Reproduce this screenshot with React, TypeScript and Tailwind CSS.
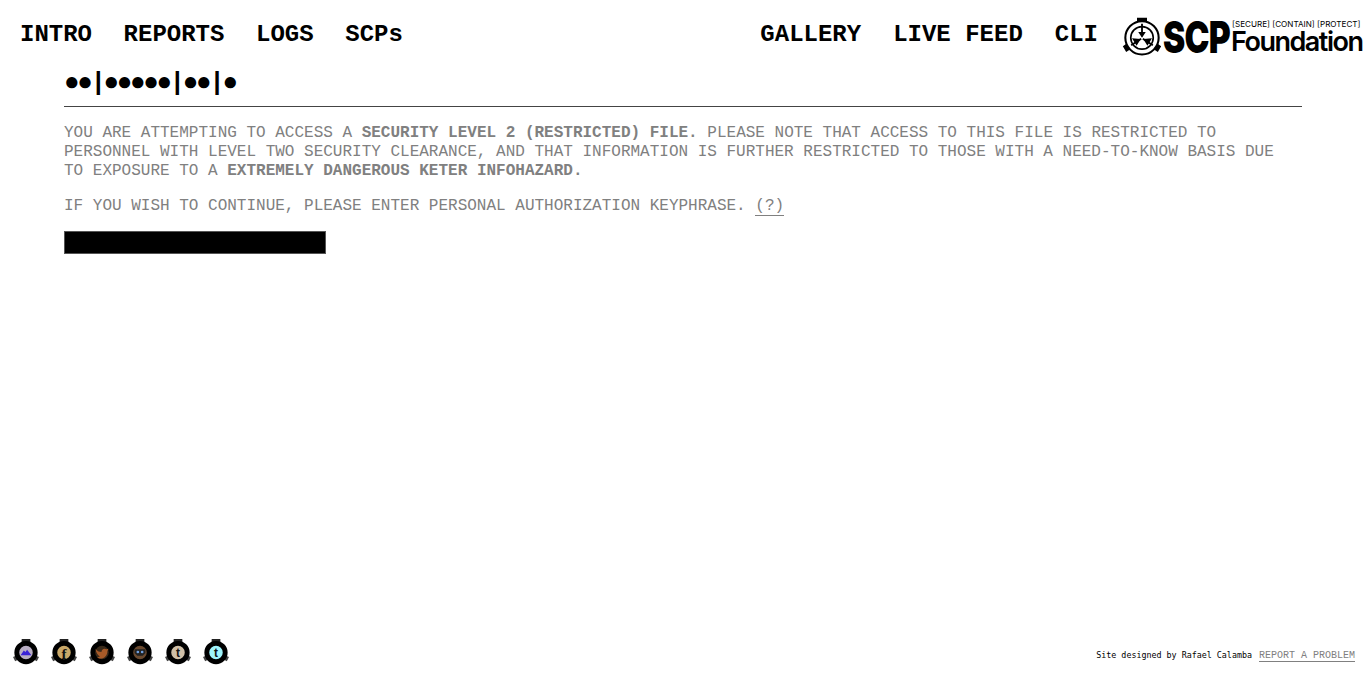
import { ReactNode } from "react";

const mono = "font-['Liberation_Mono','Courier_New',monospace]";

function NavLink({ children }: { children: ReactNode }) {
  return <a className={`${mono} text-2xl leading-[28px] font-bold text-black whitespace-pre`}>{children}</a>;
}

function Logo() {
  return (
    <div className="flex items-start w-[243px] shrink-0">
      <svg width="40" height="40" viewBox="0 0 48 48" className="shrink-0">
        <path d="M18 1h12v6h-12z M1 35l6-4 4 7-6 4z M47 35l-6-4-4 7 6 4z" fill="#000" />
        <circle cx="24" cy="25" r="20" fill="#fff" stroke="#000" strokeWidth="2.5" />
        <circle cx="24" cy="25" r="13.5" fill="none" stroke="#000" strokeWidth="2" />
        <path d="M24 8v15M11 34l12-8M37 34l-12-8" fill="none" stroke="#000" strokeWidth="2.2" />
        <path d="M19.5 18l4.5 7 4.5-7zM12 25.5l10.5 1-5 8zM36 25.5l-10.5 1 5 8z" fill="#000" />
      </svg>
      <span className="block w-[67px] origin-left scale-x-[0.76] font-['Inter',sans-serif] text-[44px] leading-[40px] font-black tracking-[-1px] text-black ml-[1px] whitespace-nowrap">SCP</span>
      <div className="flex flex-col ml-[1px] w-[131px]">
        <span className="font-['Inter',sans-serif] text-[8.1px] leading-[9px] mt-[3px] ml-[1px] text-black whitespace-nowrap">[SECURE] [CONTAIN] [PROTECT]</span>
        <span className="font-['Inter',sans-serif] text-[27px] leading-[26px] font-semibold tracking-[-1.5px] text-black whitespace-nowrap">Foundation</span>
      </div>
    </div>
  );
}

function SocialBadge({ bg, children }: { bg: string; children?: ReactNode }) {
  return (
    <svg width="26" height="26" viewBox="0 0 48 48" className="shrink-0">
      <rect x="16" y="0" width="16" height="6" fill="#222" />
      <path d="M0 33l7-3 3 8-6 3zM48 33l-7-3-3 8 6 3z" fill="#444" />
      <circle cx="24" cy="25" r="17" fill={bg} stroke="#000" strokeWidth="9" />
      {children}
    </svg>
  );
}

export default function App() {
  return (
    <div className="h-[673px] flex flex-col bg-white">
      <header className="flex items-start justify-between pl-5 pr-[1px] pt-[17px]">
        <nav className="flex gap-[31.6px] mt-[4px]">
          <NavLink>INTRO</NavLink>
          <NavLink>REPORTS</NavLink>
          <NavLink>LOGS</NavLink>
          <NavLink>SCPs</NavLink>
        </nav>
        <div className="flex items-start gap-[24px]">
          <nav className="flex gap-8 mt-[4px]">
            <NavLink>GALLERY</NavLink>
            <NavLink>LIVE FEED</NavLink>
            <NavLink>CLI</NavLink>
          </nav>
          <Logo />
        </div>
      </header>

      <main className={`${mono} mx-16 w-[1238px] mt-[11px]`}>
        <h1 className="text-[26px] tracking-[-2.4px] leading-[30px] font-bold text-black border-b border-[#444] pb-[8px]">●●|●●●●●|●●|●</h1>
        <div className="text-base leading-[19px] text-[#808080] mt-[17px]">
          <p>YOU ARE ATTEMPTING TO ACCESS A <b>SECURITY LEVEL 2 (RESTRICTED) FILE.</b> PLEASE NOTE THAT ACCESS TO THIS FILE IS RESTRICTED TO</p>
          <p>PERSONNEL WITH LEVEL TWO SECURITY CLEARANCE, AND THAT INFORMATION IS FURTHER RESTRICTED TO THOSE WITH A NEED-TO-KNOW BASIS DUE</p>
          <p>TO EXPOSURE TO A <b>EXTREMELY DANGEROUS KETER INFOHAZARD.</b></p>
        </div>
        <p className="text-base leading-[19px] text-[#808080] mt-4">
          IF YOU WISH TO CONTINUE, PLEASE ENTER PERSONAL AUTHORIZATION KEYPHRASE.{" "}
          <a className="border-b border-[#808080]">(?)</a>
        </p>
        <input className="block w-[262px] h-[23px] mt-[15px] bg-black border border-[#555] outline-none" />
      </main>

      <footer className="mt-auto flex items-end justify-between pl-[13px] pr-[11px] pb-[8px]">
        <div className="flex gap-3">
          <SocialBadge bg="#b9aec4">
            <path d="M14 30l6-9 3 3 3-4 8 10z" fill="#3a22d8" />
          </SocialBadge>
          <SocialBadge bg="#c9a868">
            <text x="24" y="36" textAnchor="middle" fontFamily="Liberation Serif" fontWeight="700" fontSize="28" fill="#111">f</text>
          </SocialBadge>
          <SocialBadge bg="#3a2a1a">
            <path d="M12 18c4 5 7 6 11 6 0-5 5-8 9-5l4-1-2 4c0 9-6 14-12 14-3 0-5-1-7-2 2 0 4-1 5-2-4-2-7-7-8-14z" fill="#a85a28" />
          </SocialBadge>
          <SocialBadge bg="#6a4a30">
            <path d="M14 19h20v7l-5 5h-10l-5-5z" fill="#222" />
            <circle cx="20" cy="24" r="2.5" fill="#6f9fe0" />
            <circle cx="28" cy="24" r="2.5" fill="#6f9fe0" />
          </SocialBadge>
          <SocialBadge bg="#d0c0a8">
            <text x="24" y="34" textAnchor="middle" fontFamily="Liberation Sans" fontWeight="700" fontSize="22" fill="#111">t</text>
          </SocialBadge>
          <SocialBadge bg="#9ff4fb">
            <text x="24" y="34" textAnchor="middle" fontFamily="Liberation Sans" fontWeight="700" fontSize="22" fill="#111">t</text>
          </SocialBadge>
        </div>
        <div className="flex items-end gap-[7px] pb-[3px]">
          <span className="font-['DejaVu_Sans_Mono',monospace] text-[8.35px] leading-[12px] mb-[1px] text-black">Site designed by Rafael Calamba</span>
          <a className={`${mono} text-[10px] leading-[10px] text-[#808080] border-b border-[#808080]`}>REPORT A PROBLEM</a>
        </div>
      </footer>
    </div>
  );
}
